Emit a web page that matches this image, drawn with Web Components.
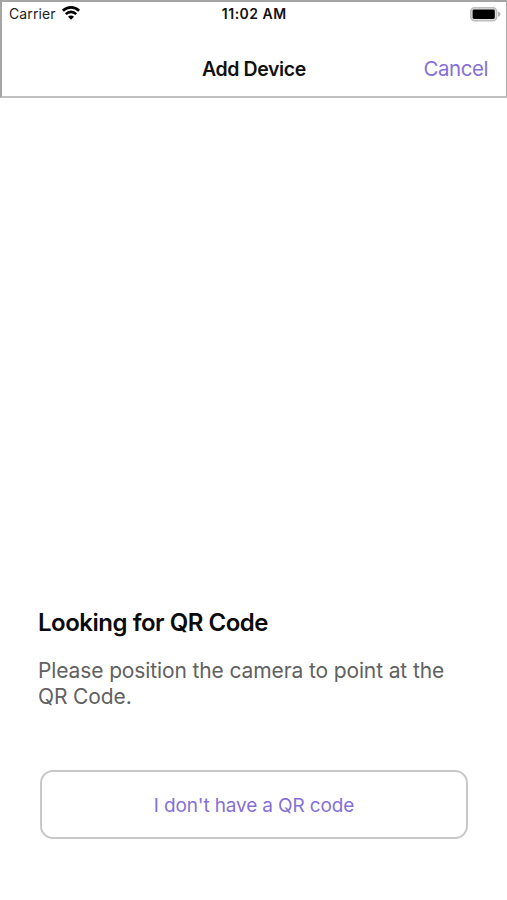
<!DOCTYPE html>
<html lang="en">
<head>
<meta charset="utf-8">
<title>Add Device</title>
<style>
html,body{margin:0;height:100%;background:#fff}
body{font-family:Inter,"Liberation Sans",sans-serif;overflow:hidden}
</style>
</head>
<body>
<device-screen>
  <nav-header slot="header">
    <status-bar slot="status" carrier="Carrier" time="11:02 AM"></status-bar>
    <span slot="title">Add Device</span>
    <span slot="action">Cancel</span>
  </nav-header>
  <scan-message>
    <span slot="heading">Looking for QR Code</span>
    Please position the camera to point at the QR Code.
  </scan-message>
  <outline-button>I don't have a QR code</outline-button>
</device-screen>
<script>
const define = (name, html, setup) => customElements.define(name, class extends HTMLElement {
  constructor() {
    super();
    this.attachShadow({mode: 'open'}).innerHTML = html;
  }
  connectedCallback() { if (setup) setup(this, this.shadowRoot); }
});

define('wifi-icon', `<style>:host{display:block;width:18px;height:14px}svg{display:block}</style>
<svg width="18" height="14" viewBox="0 0 18 14">
  <g fill="none" stroke="#000" stroke-width="2.6">
    <path d="M.9 4.8Q4.4 1.4 9 1.4T17.1 4.8"/>
    <path d="M3.8 8.1Q6.1 5.9 9 5.9T14.2 8.1"/>
  </g>
  <path d="M9 13.8 6 10.8Q7.3 9.5 9 9.5T12 10.8Z"/>
</svg>`);

define('battery-icon', `<style>:host{display:block;width:31px;height:15px}svg{display:block}</style>
<svg width="31" height="15" viewBox="0 0 31 15">
  <rect x=".8" y=".8" width="25.8" height="12.9" rx="3.8" fill="#e4e4e4" stroke="#bdbdbd" stroke-width="1.6"/>
  <rect x="2.6" y="2.6" width="22.2" height="9.3" rx="1.4"/>
  <path d="M28 4.6Q30.4 5.4 30.4 7.2T28 9.8Z" fill="#b2b2b2"/>
</svg>`);

define('status-bar', `<style>
:host{display:grid;grid-template-columns:1fr auto 1fr;height:24px;align-items:center;line-height:24px}
.left{display:flex;align-items:center;gap:6px;padding-left:7px;font-size:14px;color:#222}
.carrier{letter-spacing:.1px}
.time{font-size:14px;font-weight:600;color:#111;letter-spacing:.5px;margin-right:-.5px}
battery-icon{justify-self:end;margin-right:5px}
wifi-icon{margin-top:-2px}
</style>
<div class="left"><span class="carrier"></span><wifi-icon></wifi-icon></div>
<span class="time"></span><battery-icon></battery-icon>`, (el, root) => {
  root.querySelector('.carrier').textContent = el.getAttribute('carrier');
  root.querySelector('.time').textContent = el.getAttribute('time');
});

define('nav-header', `<style>
:host{display:flex;flex-direction:column;box-sizing:border-box;height:98px;border-style:solid;border-width:2px 1px 2px 2px;border-color:#a5a5a5 #aaa #c0c0c0 #a5a5a5}
.row{flex:1;display:grid;grid-template-columns:1fr auto 1fr;align-items:center;padding-top:15px}
.title{grid-column:2;font-size:19.5px;font-weight:600;color:#111;letter-spacing:-.4px}
.action{justify-self:end;padding-right:18px;font-size:20.5px;color:#8570d8;letter-spacing:-.45px}
</style>
<slot name="status"></slot>
<div class="row"><div class="title"><slot name="title"></slot></div><div class="action"><slot name="action"></slot></div></div>`);

define('scan-message', `<style>
:host{display:block;padding:0 38px}
h1{margin:0 0 19px;font-size:24px;line-height:32px;font-weight:600;color:#0b0b0b;letter-spacing:-.48px}
p{margin:0;font-size:21px;line-height:26px;color:#616161;width:425px;letter-spacing:-.12px}
</style>
<h1><slot name="heading"></slot></h1><p><slot></slot></p>`);

define('outline-button', `<style>
:host{display:block;margin:60px 39px 61px 40px}
button{display:block;box-sizing:border-box;width:100%;height:69px;padding:1px 0 0;border:2px solid #c8c8c8;border-radius:13px;background:#fff;font:19px Inter,"Liberation Sans",sans-serif;letter-spacing:-.14px;color:#8570d8}
</style>
<button type="button"><slot></slot></button>`);

define('device-screen', `<style>
:host{display:flex;flex-direction:column;height:900px;width:507px;background:#fff}
main{flex:1;display:flex;flex-direction:column;justify-content:flex-end}
</style>
<slot name="header"></slot><main><slot></slot></main>`);
</script>
</body>
</html>
